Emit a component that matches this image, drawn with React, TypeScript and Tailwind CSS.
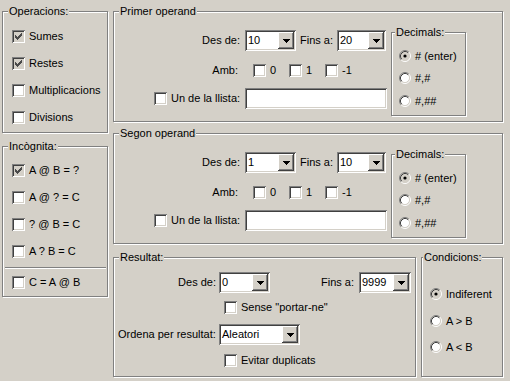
import React from "react";

type Kids = { children?: React.ReactNode; className?: string };

// etched group frame with its caption sitting on the top line
function Group({
  title,
  className = "",
  titleClass = "left-[5px]",
  children,
}: Kids & { title: string; titleClass?: string }) {
  return (
    <div
      className={`relative border border-[#808080] shadow-[inset_1px_1px_0_#fff,1px_1px_0_#fff] ${className}`}
    >
      <span
        className={`absolute -top-[7px] ${titleClass} bg-[#d4d0c8] px-[1px] leading-[13px] whitespace-nowrap`}
      >
        {title}
      </span>
      {children}
    </div>
  );
}

const sunken =
  "shadow-[inset_1px_1px_0_#808080,inset_-1px_-1px_0_#fff,inset_2px_2px_0_#404040,inset_-2px_-2px_0_#d4d0c8]";

function Combo({ value, className = "" }: { value: string; className?: string }) {
  return (
    <div
      className={`flex h-[21px] shrink-0 bg-white p-[2px] shadow-[inset_1px_1px_0_#808080,inset_-1px_-1px_0_#fff,inset_2px_2px_0_#404040,inset_-2px_-2px_0_#d4d0c8] ${className}`}
    >
      <span className="flex-1 pl-[1px] leading-[17px] overflow-hidden">{value}</span>
      <span className="flex h-[17px] w-[16px] items-center justify-center bg-[#d4d0c8] shadow-[inset_-1px_-1px_0_#404040,inset_1px_1px_0_#fff,inset_-2px_-2px_0_#808080,inset_2px_2px_0_#d4d0c8]">
        <svg width="7" height="4" shapeRendering="crispEdges">
          <path d="M0 0h7v1H0z M1 1h5v1H1z M2 2h3v1H2z M3 3h1v1H3z" fill="#000" />
        </svg>
      </span>
    </div>
  );
}

function Box({ checked = false }: { checked?: boolean }) {
  return (
    <span
      className={`flex h-[13px] w-[13px] shrink-0 items-center justify-center ${sunken} ${
        checked ? "bg-[#d4d0c8]" : "bg-white"
      }`}
    >
      {checked && (
        <svg width="7" height="7" shapeRendering="crispEdges">
          <path
            d="M0 2h1v3H0z M1 3h1v3H1z M2 4h1v3H2z M3 3h1v3H3z M4 2h1v3H4z M5 1h1v3H5z M6 0h1v3H6z"
            fill="#4a4a4a"
          />
        </svg>
      )}
    </span>
  );
}

function Radio({ on = false }: { on?: boolean }) {
  return (
    <svg width="12" height="12" className="shrink-0">
      <circle cx="6" cy="6" r="4.5" fill={on ? "#d4d0c8" : "#fff"} />
      <path d="M2.11 9.89A5.5 5.5 0 0 1 9.89 2.11" fill="none" stroke="#808080" />
      <path d="M9.89 2.11A5.5 5.5 0 0 1 2.11 9.89" fill="none" stroke="#fff" />
      <path d="M2.82 9.18A4.5 4.5 0 0 1 9.18 2.82" fill="none" stroke="#404040" />
      <path d="M9.18 2.82A4.5 4.5 0 0 1 2.82 9.18" fill="none" stroke="#d4d0c8" />
      {on && <circle cx="6" cy="6" r="1.6" fill="#000" />}
    </svg>
  );
}

function CheckRow({ label, checked, className = "" }: { label: string; checked?: boolean; className?: string }) {
  return (
    <div className={`flex h-[16px] items-center gap-[4px] ${className}`}>
      <Box checked={checked} />
      <span className="whitespace-nowrap">{label}</span>
    </div>
  );
}

function RadioRow({ label, on, className = "" }: { label: string; on?: boolean; className?: string }) {
  return (
    <div className={`flex h-[16px] items-center gap-[4px] ${className}`}>
      <Radio on={on} />
      <span className="whitespace-nowrap">{label}</span>
    </div>
  );
}

function Operand({ title, from, to, className = "" }: { title: string; from: string; to: string; className?: string }) {
  return (
    <Group title={title} className={`flex h-[111px] ${className}`}>
      <div className="flex w-[277px] flex-col">
        <div className="mt-[18px] flex h-[21px] items-center">
          <span className="w-[126px] text-right">Des de:</span>
          <Combo value={from} className="ml-[5px] w-[51px]" />
          <span className="ml-[4px] w-[33px] whitespace-nowrap">Fins a:</span>
          <Combo value={to} className="ml-[4px] w-[49px]" />
        </div>
        <div className="mt-[11px] flex h-[16px] items-center">
          <span className="w-[124px] text-right">Amb:</span>
          <CheckRow label="0" className="ml-[15px] w-[36px]" />
          <CheckRow label="1" className="w-[36px]" />
          <CheckRow label="-1" className="w-[36px]" />
        </div>
        <div className="mt-[10px] flex h-[21px] items-center">
          <div className="w-[126px] pl-[40px]">
            <CheckRow label="Un de la llista:" />
          </div>
          <div className={`ml-[5px] h-[21px] w-[142px] bg-white ${sunken}`} />
        </div>
      </div>
      <Group title="Decimals:" titleClass="left-[3px]" className="mt-[20px] flex h-[84px] w-[75px] flex-col pl-[7px]">
        <RadioRow label="# (enter)" on className="mt-[15px]" />
        <RadioRow label="#,#" className="mt-[6px]" />
        <RadioRow label="#,##" className="mt-[7px]" />
      </Group>
    </Group>
  );
}

export default function App() {
  return (
    <div className="flex h-[381px] w-[510px] overflow-hidden bg-[#d4d0c8] pl-[2px] pt-[11px] font-['Liberation_Sans',Arial,sans-serif] text-[11px] leading-[13px] text-black">
      {/* left column */}
      <div className="flex w-[106px] flex-col">
        <Group title="Operacions:" className="flex h-[122px] flex-col pl-[9px]">
          <CheckRow label="Sumes" checked className="mt-[16px]" />
          <CheckRow label="Restes" checked className="mt-[11px]" />
          <CheckRow label="Multiplicacions" className="mt-[11px]" />
          <CheckRow label="Divisions" className="mt-[11px]" />
        </Group>
        <Group title="Incògnita:" className="mt-[13px] flex h-[151px] flex-col">
          <CheckRow label="A @ B = ?" checked className="ml-[9px] mt-[15px]" />
          <CheckRow label="A @ ? = C" className="ml-[9px] mt-[11px]" />
          <CheckRow label="? @ B = C" className="ml-[9px] mt-[11px]" />
          <CheckRow label="A ? B = C" className="ml-[9px] mt-[11px]" />
          <div className="ml-[2px] mt-[8px] h-[2px] w-[101px] border-t border-b border-t-[#808080] border-b-white" />
          <CheckRow label="C = A @ B" className="ml-[9px] mt-[5px]" />
        </Group>
      </div>

      {/* right column */}
      <div className="ml-[5px] flex w-[390px] flex-col">
        <Operand title="Primer operand" from="10" to="20" />
        <Operand title="Segon operand" from="1" to="10" className="mt-[11px]" />
        <div className="mt-[13px] flex">
          <Group title="Resultat:" className="flex h-[120px] w-[303px] flex-col">
            <div className="mt-[14px] flex h-[21px] items-center pr-[4px]">
              <span className="w-[102px] text-right">Des de:</span>
              <Combo value="0" className="ml-[3px] w-[51px]" />
              <span className="ml-auto">Fins a:</span>
              <Combo value="9999" className="ml-[5px] w-[52px]" />
            </div>
            <CheckRow label={'Sense "portar-ne"'} className="mt-[6px] pl-[110px]" />
            <div className="mt-[9px] flex h-[21px] items-center">
              <span className="w-[105px] whitespace-nowrap pl-[4px]">Ordena per resultat:</span>
              <Combo value="Aleatori" className="w-[81px]" />
            </div>
            <CheckRow label="Evitar duplicats" className="mt-[7px] pl-[110px]" />
          </Group>
          <Group title="Condicions:" titleClass="left-[1px]" className="ml-[5px] flex h-[120px] w-[82px] flex-col pl-[8px]">
            <RadioRow label="Indiferent" on className="mt-[28px]" />
            <RadioRow label="A > B" className="mt-[11px]" />
            <RadioRow label="A < B" className="mt-[10px]" />
          </Group>
        </div>
      </div>
    </div>
  );
}
